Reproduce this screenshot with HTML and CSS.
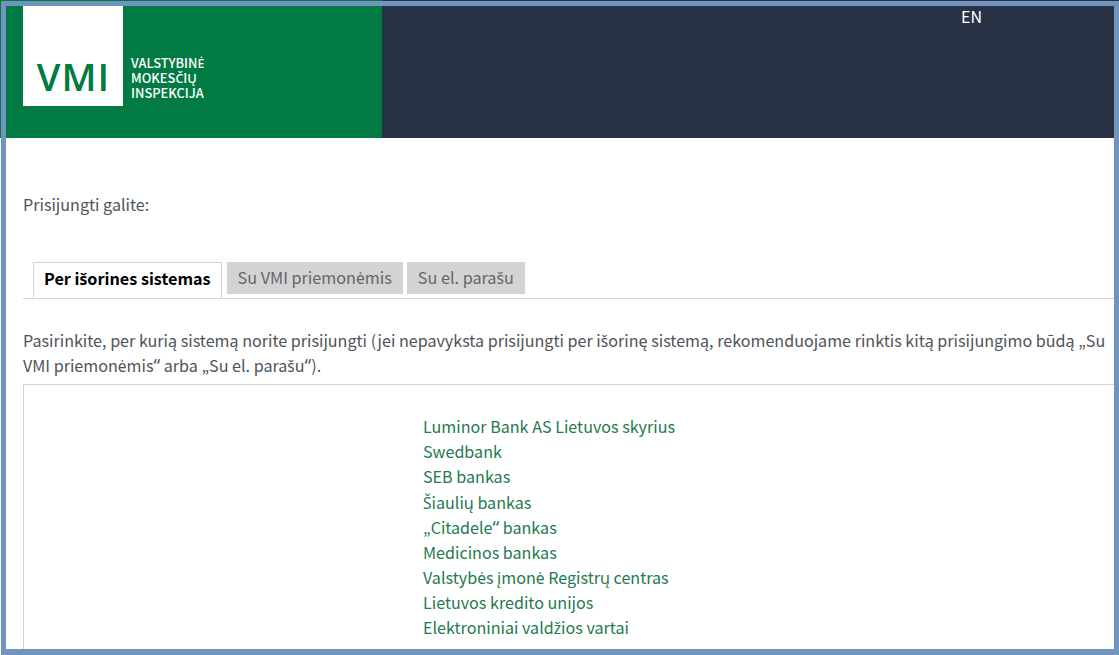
FILE: index.html
```html
<!DOCTYPE html>
<html lang="lt">
<head>
<meta charset="utf-8">
<title>VMI</title>
<link rel="stylesheet" href="styles.css">
</head>
<body>
<header class="header">
  <div class="brand">
    <div class="logo-box"><span class="logo-mark">VMI</span></div>
    <div class="logo-text">VALSTYBIN<span class="alt">Ė</span><br>MOKES<span class="alt">Č</span>IŲ<br>INSPEKCIJA</div>
  </div>
  <div class="topbar"><a class="lang" href="#">EN</a></div>
</header>
<main class="content">
  <p class="intro">Prisijungti galite:</p>
  <nav class="tabs">
    <a class="tab tab-active" href="#">Per i<span class="alt">š</span>orines sistemas</a>
    <a class="tab" href="#">Su VMI priemon<span class="alt">ė</span>mis</a>
    <a class="tab" href="#">Su el. para<span class="alt">š</span>u</a>
  </nav>
  <p class="hint">Pasirinkite, per kurią sistemą norite prisijungti (jei nepavyksta prisijungti per i<span class="alt">š</span>orinę sistemą, rekomenduojame rinktis kitą prisijungimo būdą „Su VMI priemon<span class="alt">ė</span>mis<span class="alt quote">“</span> arba „Su el. para<span class="alt">š</span>u<span class="alt quote">“</span>).</p>
  <section class="panel">
    <ul class="systems">
      <li><a href="#">Luminor Bank AS Lietuvos skyrius</a></li>
      <li><a href="#">Swedbank</a></li>
      <li><a href="#">SEB bankas</a></li>
      <li><a href="#"><span class="alt">Š</span>iaulių bankas</a></li>
      <li><a href="#">„Citadele<span class="alt quote">“</span> bankas</a></li>
      <li><a href="#">Medicinos bankas</a></li>
      <li><a href="#">Valstyb<span class="alt">ė</span>s įmon<span class="alt">ė</span> Registrų centras</a></li>
      <li><a href="#">Lietuvos kredito unijos</a></li>
      <li><a href="#">Elektroniniai vald<span class="alt">ž</span>ios vartai</a></li>
    </ul>
  </section>
</main>
<div class="frame"></div>
</body>
</html>
```
FILE: styles.css
```css
html, body {
  margin: 0;
  height: 655px;
  overflow: hidden;
  background: #fff;
}
body {
  font-family: "Noto Sans CJK SC", "Noto Sans", sans-serif;
  font-size: 16.13px;
  color: #50535a;
}
a { text-decoration: none; color: inherit; }
.alt { font-family: "Noto Sans", sans-serif; font-size: 0.97em; line-height: 0; }
.quote { font-size: 1.15em; }
.header { display: flex; height: 138px; }
.brand {
  width: 382px;
  background: #017a43;
  display: flex;
  padding: 6px 0 0 23px;
  box-sizing: border-box;
}
.logo-box {
  width: 100px;
  height: 100px;
  background: #fff;
  display: flex;
  justify-content: center;
  padding: 50px 0 0 1px;
  box-sizing: border-box;
}
.logo-mark {
  font-family: "Open Sans", sans-serif;
  font-size: 38px;
  font-weight: 600;
  letter-spacing: 1px;
  line-height: 40px;
  color: #017a43;
}
.logo-text {
  margin: 49px 0 0 8px;
  color: #fff;
  font-size: 12.85px;
  line-height: 15px;
  font-weight: 500;
}
.topbar { flex: 1; background: #293144; padding: 4px 0 0 579px; box-sizing: border-box; }
.lang { color: #fff; font-size: 16px; line-height: 22px; }
.content { padding: 0 0 0 23px; }
.intro { margin: 54px 0 0; line-height: 24px; }
.tabs {
  display: flex;
  gap: 4px;
  margin-top: 46px;
  padding-left: 10px;
  height: 36px;
  border-bottom: 1px solid #d4d4d4;
  align-items: flex-start;
  font-size: 16.2px;
}
.tab {
  height: 32px;
  line-height: 30px;
  padding: 0 11px;
  background: #d3d3d3;
  color: #666;
}
.tab-active {
  height: 36px;
  line-height: 30px;
  padding: 0 10px;
  margin-right: 1px;
  background: #fff;
  color: #000;
  font-weight: 700;
  border: 1px solid #d4d4d4;
  border-bottom: 0;
  box-sizing: border-box;
}
.hint { margin: 29px 0 0; line-height: 25px; }
.panel {
  margin-top: 6px;
  border: 1px solid #d4d4d4;
  border-right: 0;
  height: 300px;
  padding: 29.2px 0 0 399px;
  box-sizing: border-box;
}
.systems { list-style: none; margin: 0; padding: 0; color: #1f7a4d; }
.systems li { line-height: 25.125px; }
.frame {
  position: fixed;
  left: 1px;
  top: 1px;
  width: 1118px;
  height: 654px;
  box-sizing: border-box;
  border: 5px solid #7094bd;
  border-bottom-width: 6px;
  pointer-events: none;
}
```
